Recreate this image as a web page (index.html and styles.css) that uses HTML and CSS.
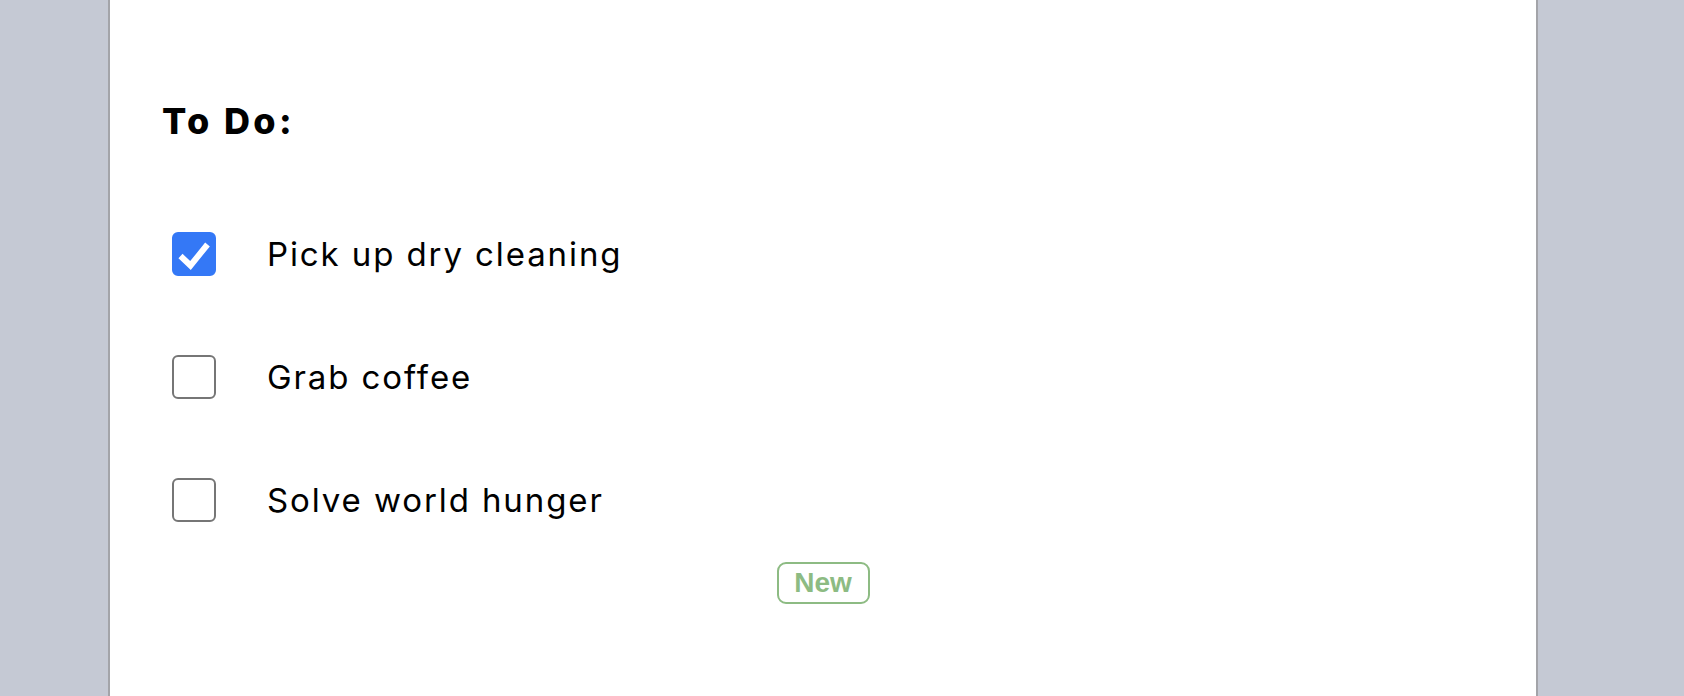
FILE: index.html
```html
<!DOCTYPE html>
<html>
<head>
<meta charset="utf-8">
<link rel="stylesheet" href="styles.css">
</head>
<body>
<main class="card">
  <h2 class="title">To Do:</h2>
  <ul class="todo-list">
    <li class="todo">
      <span class="check checked">
        <svg viewBox="0 0 44 44" width="44" height="44"><polyline points="8.5,24 18.5,33.5 35.5,12.5" fill="none" stroke="#fff" stroke-width="6" stroke-linejoin="miter"/></svg>
      </span>
      <span class="label">Pick up dry cleaning</span>
    </li>
    <li class="todo">
      <span class="check"></span>
      <span class="label">Grab coffee</span>
    </li>
    <li class="todo">
      <span class="check"></span>
      <span class="label">Solve world hunger</span>
    </li>
  </ul>
  <div class="actions">
    <button class="new-btn">New</button>
  </div>
</main>
</body>
</html>
```

FILE: styles.css
```css
html, body {
  margin: 0;
  padding: 0;
  height: 100%;
  overflow: hidden;
}
body {
  background: #c5c9d4;
  font-family: Inter, "Noto Sans", sans-serif;
  color: #000;
}
.card {
  margin-left: 108px;
  width: 1430px;
  height: 696px;
  box-sizing: border-box;
  background: #fff;
  border-left: 2px solid #a3a4a9;
  border-right: 2px solid #a3a4a9;
  padding: 101px 52px 0;
  display: flex;
  flex-direction: column;
}
.title {
  margin: 0;
  font-size: 36px;
  line-height: 40px;
  font-weight: 800;
  letter-spacing: 3.4px;
}
.todo-list {
  list-style: none;
  margin: 91px 0 0;
  padding: 0 0 0 10px;
  display: flex;
  flex-direction: column;
  gap: 79px;
}
.todo {
  display: flex;
  align-items: center;
  gap: 51px;
  height: 44px;
}
.check {
  width: 44px;
  height: 44px;
  box-sizing: border-box;
  border: 2px solid #767676;
  border-radius: 6px;
  flex: none;
  display: block;
}
.check.checked {
  background: #3478f6;
  border-color: #3478f6;
  position: relative;
}
.check.checked svg {
  position: absolute;
  left: -2px;
  top: -2px;
}
.label {
  font-size: 33px;
  line-height: 44px;
  font-weight: 400;
  letter-spacing: 1.9px;
}
.actions {
  display: flex;
  justify-content: center;
  margin-top: 40px;
}
.new-btn {
  width: 93px;
  height: 42px;
  box-sizing: border-box;
  border: 2px solid #8dbb83;
  border-radius: 9px;
  background: #fff;
  color: #8dbb83;
  font-family: "Liberation Sans", Arial, sans-serif;
  font-weight: 700;
  font-size: 28px;
  line-height: 38px;
  padding: 0;
}
```
